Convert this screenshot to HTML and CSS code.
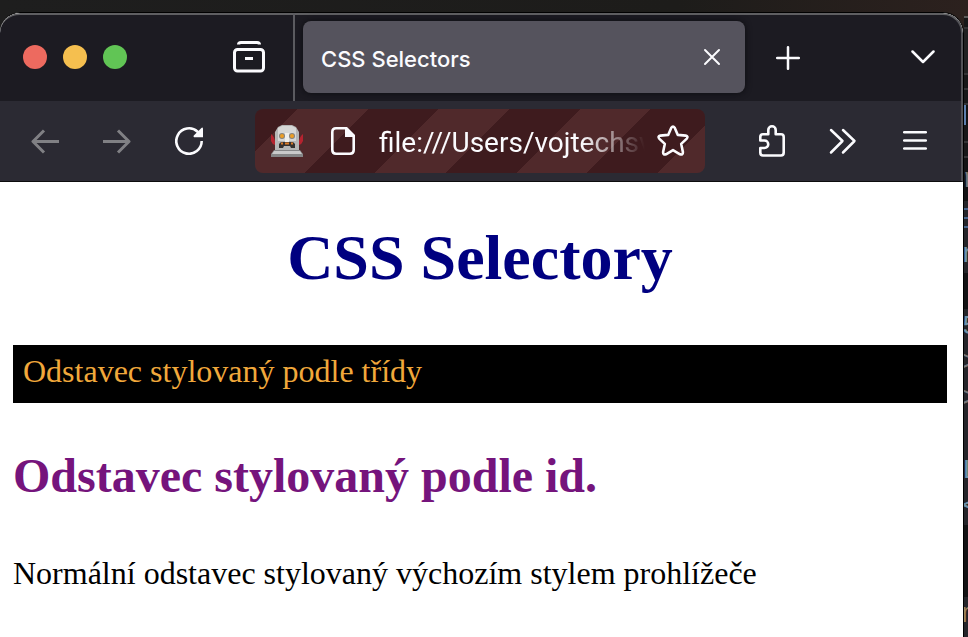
FILE: index.html
```html
<!DOCTYPE html>
<html lang="cs">
<head>
<meta charset="utf-8">
<title>CSS Selectors</title>
<link rel="stylesheet" href="styles.css">
</head>
<body>
<div class="desktop">
  <div class="window">
    <header class="chrome">
      <div class="tabbar">
        <div class="lights">
          <button class="light close" aria-label="Close window"></button>
          <button class="light minimize" aria-label="Minimize window"></button>
          <button class="light zoom" aria-label="Zoom window"></button>
        </div>
        <button class="tool recent" aria-label="Recent browsing">
          <svg width="32" height="32" viewBox="0 0 32 32" fill="none" stroke="currentColor" stroke-width="3" stroke-linecap="round"><path d="M5.500 3.500Q5.500 1.500 8 1.500H24Q26.500 1.500 26.500 3.500" stroke-linecap="butt"/><rect x="1.500" y="8.500" width="29" height="21.500" rx="3"/><path d="M12 17.500H20" stroke-linecap="butt"/></svg>
        </button>
        <div class="tab">
          <span class="tab-title">CSS Selectors</span>
          <button class="tab-close" aria-label="Close tab">
            <svg width="18" height="18" viewBox="0 0 18 18" fill="none" stroke="currentColor" stroke-width="2" stroke-linecap="round"><path d="M2 2L16 16M16 2L2 16"/></svg>
          </button>
        </div>
        <button class="tool new-tab" aria-label="New tab">
          <svg width="24" height="26" viewBox="0 -2 24 26" fill="none" stroke="currentColor" stroke-width="2.500" stroke-linecap="round"><path d="M12 1.200V22.800M1.200 12H22.800"/></svg>
        </button>
        <button class="tool all-tabs" aria-label="List all tabs">
          <svg width="24" height="24" viewBox="0 0 24 24" fill="none" stroke="currentColor" stroke-width="2.500" stroke-linecap="round" stroke-linejoin="round"><path d="M1.500 6.500L12 17L22.500 6.500"/></svg>
        </button>
      </div>
      <div class="toolbar">
        <button class="tool" aria-label="Back" disabled>
          <svg width="28" height="28" viewBox="0 0 28 28" fill="none" stroke="currentColor" stroke-width="3" stroke-linejoin="round"><path d="M28 14.500H1.500M13 3.500L2 14.500L13 25.500"/></svg>
        </button>
        <button class="tool" aria-label="Forward" disabled>
          <svg width="28" height="28" viewBox="0 0 28 28" fill="none" stroke="currentColor" stroke-width="3" stroke-linejoin="round"><path d="M0 14.500H26.500M15 3.500L26 14.500L15 25.500"/></svg>
        </button>
        <button class="tool" aria-label="Reload">
          <svg width="28" height="28" viewBox="0 0 28 28" fill="none" stroke="currentColor" stroke-width="2.600"><path d="M26.700 14A12.700 12.700 0 1 1 22.600 4.700L24 6" /><path d="M28 1.200V10.200H19Q18 9.500 18.800 8.600L26.400 1Q27.500 0 28 1.200Z" fill="currentColor" stroke="none"/></svg>
        </button>
        <div class="urlbar">
          <svg class="robot" width="32" height="32" viewBox="0 0 32 32">
            <path d="M0 9Q3 11 4 16V20Q1 19 0 16ZM32 9Q29 11 28 16V20Q31 19 32 16Z" fill="#b5232f"/>
            <path d="M7 2L11 0H21L25 2L28 7V26H4V7Z" fill="#b5b6b6"/>
            <path d="M7 3L11 1H21L25 3V16H7Z" fill="#d6d7d6"/>
            <path d="M14 8H18V17H14Z" fill="#eeeeec"/>
            <circle cx="11" cy="11" r="3" fill="#84817b"/><circle cx="21" cy="11" r="3" fill="#84817b"/>
            <circle cx="11" cy="11" r="2" fill="#ed9d24"/><circle cx="21" cy="11" r="2" fill="#ed9d24"/>
            <path d="M10 17H22L24 19V23H20L19 21H13L12 23H8V19Z" fill="#34312f"/>
            <path d="M10 18.500H12M14 18.500H18M20 18.500H22" stroke="#dc7d29" stroke-width="2"/>
            <path d="M3 25H29L32 29V32H0V29Z" fill="#858687"/><path d="M3 26H29L31 29H1Z" fill="#c9caca"/>
          </svg>
          <svg class="page" width="24" height="28" viewBox="0 0 24 28" fill="none"><path d="M15 1.300H5Q1.300 1.300 1.300 5V23Q1.300 26.700 5 26.700H19Q22.700 26.700 22.700 23V9" stroke="currentColor" stroke-width="2.600"/><path d="M14 0H16L24 8V10H14Z" fill="currentColor"/></svg>
          <input class="address" type="text" aria-label="Address" value="file:///Users/vojtechsv">
          <button class="bookmark" aria-label="Bookmark this page">
            <svg width="32" height="32" viewBox="0 0 32 32" fill="none" stroke="currentColor" stroke-width="2.600" stroke-linejoin="round"><path d="M14.300 2.700Q16 .300 17.700 2.700L20.800 9.900L28.700 10.600Q31.500 11.300 29.800 13.600L24.200 18.900L25.900 27Q26 30.200 23 29.300L16 25.100L9 29.300Q6 30.200 6.100 27L7.800 18.900L2.200 13.600Q.500 11.300 3.300 10.600L11.200 9.900Z"/></svg>
          </button>
        </div>
        <button class="tool" aria-label="Extensions">
          <svg width="28" height="32" viewBox="-2 0 28 32" fill="none" stroke="currentColor" stroke-width="2.600" stroke-linejoin="round"><path d="M4 9.300H9.300V5A3.700 3.700 0 0 1 16.700 5V9.300H22Q24.700 9.300 24.700 12V27.500Q24.700 30.500 22 30.500H4Q1.300 30.500 1.300 27.500V23H5.500A3.700 3.700 0 0 0 5.500 15.500H1.300V12Q1.300 9.300 4 9.300Z"/></svg>
        </button>
        <button class="tool" aria-label="More tools">
          <svg width="28" height="28" viewBox="1 1 28 28" fill="none" stroke="currentColor" stroke-width="2.500" stroke-linecap="round" stroke-linejoin="round"><path d="M3 4L14.500 15L3 26.500M15 4L26.500 15L15 26.500"/></svg>
        </button>
        <button class="tool" aria-label="Application menu">
          <svg width="24" height="24" viewBox="0 0 24 24" fill="none" stroke="currentColor" stroke-width="2.500" stroke-linecap="round"><path d="M1.200 3.300H22.800M1.200 11.500H22.800M1.200 19.600H22.800"/></svg>
        </button>
      </div>
    </header>
    <main class="content">
      <h1>CSS Selectory</h1>
      <p class="trida">Odstavec stylovaný podle třídy</p>
      <p id="odstavec">Odstavec stylovaný podle id.</p>
      <p>Normální odstavec stylovaný výchozím stylem prohlížeče</p>
    </main>
  </div>
  <aside class="editor" aria-hidden="true">
    <div class="pane short"></div>
    <div class="pane tall"></div>
    <div class="pane thin"></div>
    <div class="pane thin"></div>
    <div class="caret"></div>
    <div class="pane mid"></div>
    <div class="pane thin"></div>
    <div class="line first dim">r</div>
    <div class="block">
      <div class="rules"></div>
      <div class="line blue">n</div>
    </div>
    <div class="gap"></div>
    <div class="block code">
      <div class="line blue">5</div>
      <div class="line dim">&gt;</div>
      <div class="line dim">&gt;</div>
      <div class="line"></div>
      <div class="line blue">L</div>
      <div class="line blue">&lt;</div>
    </div>
    <div class="gap wide"></div>
    <div class="block rest"><div class="line gold">m</div></div>
  </aside>
</div>
</body>
</html>
```
FILE: styles.css
```css
* {
  box-sizing: border-box;
}

body {
  margin: 0;
  background: #1d1c1b;
}

button {
  padding: 0;
  border: 0;
  background: none;
  color: inherit;
}

svg {
  display: block;
}

.desktop {
  display: flex;
  height: 100vh;
  padding-top: 12px;
  overflow: hidden;
  background: linear-gradient(90deg, #1e1e1e, #1d1c1a 70%, #2c211e) top / 100% 40px no-repeat #111112;
}

.window {
  flex: 1;
  min-width: 0;
  display: flex;
  flex-direction: column;
  border-top: 1px solid #000;
  border-right: 1px solid #000;
  border-radius: 20px 21px 0 0;
  overflow: hidden;
  background: #fff;
}

.chrome {
  color: #fbfbfe;
  background: #1c1b22;
  border-top: 2px solid #5f5f62;
  border-right: 2px solid #515156;
  border-bottom: 1px solid #0c0c0d;
  border-radius: 20px 20px 0 0;
}

.tabbar {
  display: flex;
  align-items: center;
  height: 86px;
  padding: 0 6px 2px 23px;
}

.lights {
  display: flex;
  gap: 16px;
}

.light {
  width: 24px;
  height: 24px;
  border-radius: 50%;
}

.close {
  background: #ed6a5f;
}

.minimize {
  background: #f5bf4f;
}

.zoom {
  background: #61c555;
}

.tool {
  flex: none;
  display: flex;
  align-items: center;
  justify-content: center;
  width: 64px;
  height: 64px;
}

.tool:disabled {
  color: #808084;
}

.recent {
  width: 168px;
  height: 88px;
  justify-content: flex-end;
  padding-right: 28px;
  border-right: 2px solid #5b5b60;
}

.tab {
  flex: 0 1 442px;
  min-width: 0;
  display: flex;
  align-items: center;
  justify-content: space-between;
  height: 72px;
  margin-left: 8px;
  padding: 4px 24px 0 18px;
  border-radius: 8px;
  background: #55535d;
  box-shadow: 0 0 6px #0c0c10;
}

.tab-title {
  font: 500 22px/28px Inter, sans-serif;
}

.tab-close {
  margin-bottom: 4px;
}

.new-tab {
  margin-left: 11px;
}

.all-tabs {
  margin-left: auto;
}

.toolbar {
  display: flex;
  align-items: center;
  gap: 8px;
  height: 80px;
  padding: 0 14px 0 13px;
  background: #2b2a33;
}

.urlbar {
  flex: 1;
  min-width: 0;
  display: flex;
  align-items: center;
  height: 64px;
  margin: 0 26px;
  padding: 0 16px;
  border-radius: 8px;
  background: repeating-linear-gradient(135deg, #3e1b1e 0 30px, #50292b 30px 80px, #3e1b1e 80px 100px);
}

.robot {
  flex: none;
}

.page {
  flex: none;
  margin-left: 28px;
}

.address {
  flex: 1;
  min-width: 0;
  height: 40px;
  margin: 0 12px 0 24px;
  padding: 2px 0 0;
  border: 0;
  outline: 0;
  color: #fbfbfe;
  background: none;
  font: 28px/38px Roboto, sans-serif;
  mask-image: linear-gradient(90deg, #000 calc(100% - 64px), transparent);
}

.content {
  flex: 1;
  padding: 0 16px 0 13px;
  color: #000;
  font: 32px/38px "Liberation Serif", serif;
}

h1 {
  margin: 38px 0 50px;
  color: #000080;
  font-size: 64px;
  line-height: 75px;
  text-align: center;
}

p {
  margin: 0 0 41px;
}

.trida {
  padding: 7px 10px 13px;
  color: #f1a83b;
  background: #000;
}

#odstavec {
  margin-bottom: 46px;
  color: #75147c;
  font-size: 48px;
  font-weight: bold;
  line-height: 64px;
}

.editor {
  flex: none;
  display: flex;
  flex-direction: column;
  width: 4px;
  margin-top: 4px;
  overflow: hidden;
  border-top: 2px solid #5a5a5a;
  background: #131314;
  font: 28px/36px "Liberation Mono", monospace;
  text-indent: -2px;
}

.pane {
  flex: none;
  border-bottom: 2px solid #333335;
  background: #171718;
}

.short {
  height: 11px;
}

.tall {
  height: 46px;
  background: #202021;
}

.thin {
  height: 15px;
}

.mid {
  height: 18px;
}

.caret {
  flex: none;
  width: 2px;
  height: 20px;
  background: #5c7fae;
}

.line {
  flex: none;
  height: 36px;
  overflow: hidden;
}

.first {
  height: 43px;
  line-height: 43px;
}

.dim {
  color: #77777a;
}

.blue {
  color: #6e93ab;
}

.gold {
  color: #9a835c;
}

.block {
  flex: none;
  height: 72px;
  background: #25252a;
}

.rules {
  height: 36px;
  background: repeating-linear-gradient(#25252a 0 7px, #46648c 7px 9px) top / 100% 27px no-repeat;
}

.code {
  height: 216px;
}

.gap {
  flex: none;
  height: 36px;
}

.wide {
  height: 72px;
}

.rest {
  flex: 1;
}
```
